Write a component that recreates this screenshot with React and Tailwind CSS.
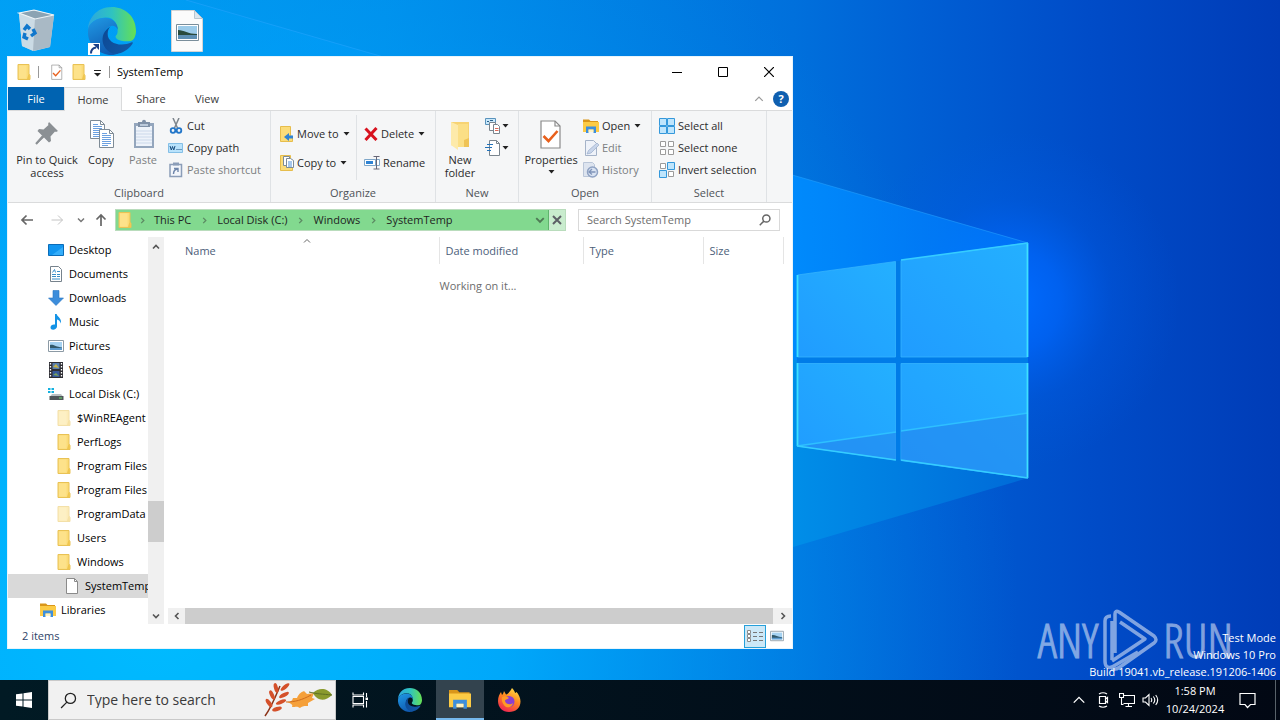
import React from "react";

/* ---------- icons ---------- */

const Svg = ({ w = 16, h = 16, vb, children, className = "" }) => (
  <svg width={w} height={h} viewBox={vb || `0 0 ${w} ${h}`} fill="none" aria-hidden="true" className={`shrink-0 ${className}`}>
    {children}
  </svg>
);

const Folder = ({ w = 16, h = 16, faded = false }) => (
  <Svg w={w} h={h} vb="0 0 16 16">
    <g opacity={faded ? 0.5 : 1}>
      <path d="M2 .5h11v9.500l1 1.500v4H2z" fill="#fbdb78" stroke="#e9c254" strokeWidth="1" />
      <path d="M3 1.500h7.500v13H3z" fill="#fde28a" />
      <path d="M12.500 10l1.200 1.500v3.500h-2.700z" fill="#f0c64e" />
    </g>
  </Svg>
);

const BigFolder = () => (
  <Svg w={32} h={32}>
    <path d="M7 3h18v25H12l-5-2z" fill="#f7d373" />
    <path d="M14 5h10v23H14z" fill="#fbdf86" />
    <path d="M7 3l7 3v25l-7-5z" fill="#fdeaaa" />
    <path d="M20 21l5-2v9h-5z" fill="#efc356" />
  </Svg>
);

const Library = ({ w = 16, h = 16 }) => (
  <Svg w={w} h={h} vb="0 0 16 16">
    <path d="M0 1.500h6l1.500 1.500H15v4H0z" fill="#d9961a" />
    <path d="M0 4h16v10H0z" fill="#fccb45" />
    <path d="M3 15V8.500h10V15h-2.500v-3.500h-5V15z" fill="#3d8fdd" />
    <path d="M5.500 11.500h5V14h-5z" fill="#fff3c4" />
  </Svg>
);

const Caret = () => (
  <Svg w={7} h={4}>
    <path d="M.5 0h6L3.500 3.500z" fill="#222" />
  </Svg>
);

const Chevron = ({ dir = "right", color = "#555", size = 8, sw = 1.500 }) => {
  const d = {
    right: "M2.500 1l3 3-3 3",
    left: "M5.500 1l-3 3 3 3",
    up: "M1 5.500l3-3 3 3",
    down: "M1 2.500l3 3 3-3",
  }[dir];
  return (
    <Svg w={size} h={size} vb="0 0 8 8">
      <path d={d} stroke={color} strokeWidth={sw} />
    </Svg>
  );
};

const Arrow = ({ dir, color }) => {
  const d = { left: "M13 7H2M6.500 2.500L2 7l4.500 4.500", right: "M1.500 7h11M8 2.500L12.500 7 8 11.500", up: "M7 13V2M2.500 6.500L7 2l4.500 4.500" }[dir];
  return (
    <Svg w={14} h={14}>
      <path d={d} stroke={color} strokeWidth={dir === "right" ? 1 : 1.700} />
    </Svg>
  );
};

const Check = ({ w, h }) => (
  <Svg w={w} h={h} vb="0 0 24 32">
    <path d="M2 2h14l5 5v22H2z" fill="#fff" stroke="#8a8a8a" strokeWidth="1.200" />
    <path d="M16 2v5h5" stroke="#8a8a8a" strokeWidth="1.200" />
    <path d="M4.500 17l5 5 9-10" stroke="#e8601c" strokeWidth="2.600" />
  </Svg>
);

const Picture = ({ w = 16, h = 14 }) => (
  <Svg w={w} h={h} vb="0 0 16 14">
    <path d="M.5 1.500h15v11H.5z" fill="#fff" stroke="#8c9aa5" />
    <path d="M2 3h12v8H2z" fill="#a5d2f2" />
    <path d="M2 6c3-1 6 2 12 2.500V10H2z" fill="#31596b" />
    <path d="M2 9h12v2H2z" fill="#5b9bd0" />
  </Svg>
);

const PinIcon = () => (
  <Svg w={32} h={32}>
    <path d="M20 5l7 7-2 1-1-.500-4.500 5 .5 4.500-2 1.500-5-5L7 24l-2 1 1-2 5.500-6-5-5L8 10l4.500.500 5-4.500-.500-1 1-2z" fill="#8b9094" />
    <path d="M12 17l-7 8" stroke="#8b9094" strokeWidth="2" />
  </Svg>
);

const Doc = ({ x, y }) => (
  <g transform={`translate(${x} ${y})`}>
    <path d="M.5.500h10l4 4v14H.5z" fill="#fff" stroke="#7e8b96" />
    <path d="M10.500.500v4h4" stroke="#7e8b96" />
    <path d="M3 6.500h9M3 8.500h9M3 10.500h9M3 12.500h9M3 14.500h9M3 16.500h6M3 4.500h5" stroke="#6ba0e0" />
  </g>
);

const CopyIcon = () => (
  <Svg w={32} h={32}>
    <Doc x={5} y={1} />
    <Doc x={14} y={10} />
  </Svg>
);

const PasteIcon = () => (
  <Svg w={32} h={32}>
    <path d="M7 4h20v25H7z" fill="#94a6bd" />
    <path d="M9 7h16v20H9z" fill="#eef3fa" />
    <path d="M9 12h16M9 15h16M9 18h16M9 21h16M9 24h16" stroke="#cbd8ea" />
    <path d="M11 3h4c0-3 4-3 4 0h4v5H11z" fill="#8091a8" />
    <path d="M13 5h8v2h-8z" fill="#bccadb" />
  </Svg>
);

const CutIcon = () => (
  <Svg>
    <path d="M5 0l4.500 10M11 0L6.500 10" stroke="#7d868d" strokeWidth="1.500" />
    <circle cx="5" cy="12.500" r="2.300" stroke="#2276c9" strokeWidth="1.800" />
    <circle cx="11" cy="12.500" r="2.300" stroke="#2276c9" strokeWidth="1.800" />
  </Svg>
);

const CopyPathIcon = () => (
  <Svg>
    <path d="M.5 3.500h14v9H.5z" fill="#b9e2fb" stroke="#84bfe6" />
    <path d="M2 6l1.300 4L4.500 6.500 5.800 10 7 6M8.500 9.500h1M10.500 9.500h1M12.500 9.500h1" stroke="#1b4f80" />
  </Svg>
);

const PasteShortcutIcon = () => (
  <Svg>
    <path d="M2 2.500h11.500v12H2z" fill="#f3f6fb" stroke="#8b9db8" strokeWidth="1.500" />
    <path d="M5 .5h6v3H5z" fill="#8b9db8" />
    <path d="M5.500 12c0-3 1-4.500 4-5M6 6.500h4V10" stroke="#6f86ab" strokeWidth="1.400" />
  </Svg>
);

const MoveIcon = () => (
  <Svg w={14} h={16}>
    <path d="M.5.500h10v9l2 1.500v4.500H.5z" fill="#fbdc79" stroke="#e6bd4c" />
    <path d="M13 9.500H9V7l-5 4 5 4v-2.500h4z" fill="#2f83d3" />
  </Svg>
);

const CopyToIcon = () => (
  <Svg w={14} h={16}>
    <path d="M.5.500h10v9l2 1.500v4.500H.5z" fill="#fbdc79" stroke="#e6bd4c" />
    <path d="M3.500 1.500h6v9h-6z" fill="#fff" stroke="#7c8b99" />
    <path d="M6.500 3.500h4l3 2v7h-7z" fill="#fff" stroke="#7c8b99" />
    <path d="M8 7h4M8 9h4M8 11h4" stroke="#4a8ddb" />
  </Svg>
);

const DeleteIcon = () => (
  <Svg w={14} h={14}>
    <path d="M1.500 1.500l11 11.500M12.500 1L1.500 13" stroke="#d8121f" strokeWidth="3" />
  </Svg>
);

const RenameIcon = () => (
  <Svg>
    <path d="M.5 4.500h11v6H.5zM11.500 4.500h4v6h-4" fill="#fff" stroke="#7fa7c9" />
    <path d="M2 6h7v3H2z" fill="#2f83d3" />
    <path d="M9.500 1.500h6M12.500 1v13M9.500 14h6" stroke="#667" />
  </Svg>
);

const NewItemIcon = () => (
  <Svg>
    <path d="M.5.500h10v6H.5z" fill="#c9e8fa" stroke="#5a93bd" />
    <path d="M2 3.500h2M5 2.500h3" stroke="#2a618c" />
    <path d="M4.500 4.500h6v8h-6z" fill="#fff" stroke="#7a858e" />
    <path d="M8.500 6.500h4l2 2v7h-6z" fill="#fff" stroke="#7a858e" />
    <path d="M10 10.500h3.500M10 12.500h3.500" stroke="#dd6a5a" />
  </Svg>
);

const EasyAccessIcon = () => (
  <Svg>
    <path d="M4.500.500h7l3 3v12h-10z" fill="#fff" stroke="#7a858e" />
    <path d="M11.500.500v3h3" stroke="#7a858e" />
    <path d="M2 4.500h6M0 7.500h7M2 10.500h4" stroke="#2272b9" strokeWidth="1.200" />
  </Svg>
);

const EditIcon = () => (
  <Svg>
    <path d="M2.500.500h8l3 3v12h-11z" fill="#eef2f9" stroke="#a5b3c8" />
    <path d="M4 14l1.500-3.500L14 3l2 2-8 8z" fill="#c8d5ea" stroke="#9aacca" strokeWidth=".7" />
  </Svg>
);

const HistoryIcon = () => (
  <Svg>
    <path d="M.5.500h9l2 2v12H.5z" fill="#dde4ef" stroke="#bac6d8" />
    <circle cx="9.500" cy="10" r="5" fill="#d9e3f2" stroke="#8fa2c3" strokeWidth="1.500" />
    <path d="M12.500 10H6.500M9 7l-3 3 3 2.500" stroke="#7f94b9" strokeWidth="1.300" />
  </Svg>
);

const SelectAllIcon = () => (
  <Svg>
    <path d="M.5.500h7v7h-7zM8.500.500h7v7h-7zM.5 8.500h7v7h-7zM8.500 8.500h7v7h-7z" fill="#bfe5fc" stroke="#3498db" />
  </Svg>
);
const SelectNoneIcon = () => (
  <Svg>
    <path d="M1.500 1.500h5v5h-5zM9.500 1.500h5v5h-5zM1.500 9.500h5v5h-5zM9.500 9.500h5v5h-5z" fill="#fff" stroke="#9b9b9b" />
  </Svg>
);
const InvertIcon = () => (
  <Svg>
    <path d="M1.500 1.500h5v5h-5zM9.500 9.500h5v5h-5z" fill="#fff" stroke="#9b9b9b" />
    <path d="M8.500.500h7v7h-7zM.5 8.500h7v7h-7z" fill="#bfe5fc" stroke="#3498db" />
  </Svg>
);

const DesktopIcon = () => (
  <Svg>
    <path d="M.5 2.500h15v11H.5z" fill="#1296f0" stroke="#0b6cb8" />
    <path d="M4 13l11-8v8z" fill="#35aefa" />
  </Svg>
);
const DocumentsIcon = () => (
  <Svg>
    <path d="M2.500.500h8l3 3v12h-11z" fill="#fff" stroke="#76828c" />
    <path d="M4.500 6.500l2-3 1 3M9 5.500h3M4 8.500h4M9 8.500h3M4 10.500h4M9 10.500h3M4 13h8" stroke="#3a8fca" />
  </Svg>
);
const DownloadsIcon = () => (
  <Svg>
    <path d="M5 .5h6V8h4.500L8 15.500.5 8H5z" fill="#3c8ddb" stroke="#2a77c2" strokeWidth=".6" />
  </Svg>
);
const MusicIcon = () => (
  <Svg>
    <path d="M7 0h1.700c.5 3 5.500 4 4 9.500-.3-2.500-2-3.500-3.700-4v7c0 3.500-6.500 4.500-6.500 1 0-2.500 2.500-3.500 4.500-3z" fill="#1493e6" />
  </Svg>
);
const VideosIcon = () => (
  <Svg>
    <path d="M1 0h14v16H1z" fill="#2d2d33" />
    <path d="M2.500 1v14M13.500 1v14" stroke="#fff" strokeWidth="1.300" strokeDasharray="1.500 1.500" />
    <path d="M4.500 1h7v6h-7z" fill="#5a7fae" />
    <path d="M4.500 9h7v6h-7z" fill="#36599a" />
    <path d="M5 5l3-3 3 4z" fill="#c9b445" />
    <path d="M5 13l3-2 3 3z" fill="#7aa25a" />
  </Svg>
);
const DriveIcon = () => (
  <Svg>
    <path d="M0 2h2.500v2H0zM3.500 2H6v2H3.500zM0 5h2.500v2H0zM3.500 5H6v2H3.500z" fill="#13b1e0" />
    <path d="M4 8h9l2 2.500H2z" fill="#b9bfc2" />
    <path d="M1.500 10h14v4h-14z" fill="#50565a" />
    <path d="M11 12h3" stroke="#6be06b" />
  </Svg>
);
const PageIcon = () => (
  <Svg>
    <path d="M2.500.500h8l3 3v12h-11z" fill="#fff" stroke="#8a8a8a" />
    <path d="M10.500.500v3h3" stroke="#8a8a8a" />
  </Svg>
);

const EdgeIcon = ({ size, id }) => (
  <Svg w={size} h={size} vb="0 0 256 256">
    <defs>
      <linearGradient id={`${id}a`} x1="0" y1=".3" x2="1" y2=".3">
        <stop offset="0" stopColor="#2ba6e0" />
        <stop offset=".5" stopColor="#2fc3c0" />
        <stop offset="1" stopColor="#66e053" />
      </linearGradient>
      <linearGradient id={`${id}b`} x1=".2" y1="0" x2=".6" y2="1">
        <stop offset="0" stopColor="#1f96e2" />
        <stop offset="1" stopColor="#0f59b0" />
      </linearGradient>
      <linearGradient id={`${id}c`} x1="0" y1=".3" x2="1" y2=".8">
        <stop offset="0" stopColor="#0d4a96" />
        <stop offset="1" stopColor="#1259a8" />
      </linearGradient>
    </defs>
    <path d="M152 149c-2 2-5 6-5 10 0 4 3 8 7 11 22 15 63 13 63 13 37 0 39-48 39-55C256 45 191 0 128 0 38 0 2 70 0 118c10-42 60-62 96-62 50 0 62 44 62 72 0 10-2 16-6 21z" fill={`url(#${id}a)`} />
    <path d="M0 124C4 82 46 58 92 58c40 0 68 28 68 64-18-40-70-20-74 26-4 48 32 92 78 98-14 6-24 10-40 10C58 254-6 200 0 124z" fill={`url(#${id}b)`} />
    <path d="M120 104c-24 10-46 42-42 78 6 44 46 74 84 66 36-8 64-34 76-54 3-5-1-8-5-6-60 28-130 4-128-46 0-16 6-30 15-38z" fill={`url(#${id}c)`} />
  </Svg>
);

const RecycleBin = () => (
  <Svg w={40} h={44}>
    <path d="M2 5l15-3 20 5-4 32-16 4L5 38z" fill="#cfd9e0" />
    <path d="M2 5l16 4-2 34-11-5z" fill="#cbdbe5" />
    <path d="M18 10l19-3-4 32-17 4z" fill="#a9b9c5" />
    <path d="M2 5l15-3 20 5-19 4z" fill="#8ba3b3" stroke="#eef4f7" strokeWidth="1.200" />
    <path d="M7 22l3-4 3 3M16 21l2 4-4 3M11 31l-4-2 1-4" stroke="#1077cc" strokeWidth="3.400" />
  </Svg>
);

const ImageFile = () => (
  <Svg w={34} h={44}>
    <path d="M1.500 1.500h23l8 8v33h-31z" fill="#fbfbfb" stroke="#d4d4d4" />
    <path d="M24.500 1.500v8h8z" fill="#dbe6ee" stroke="#b8c6d0" />
    <path d="M6.500 15.500h22v16h-22z" fill="#fff" stroke="#7a8e9b" />
    <path d="M8 17h19v13H8z" fill="#9ccbe9" />
    <path d="M8 21c6 0 10 4 19 4v2H8z" fill="#294a3c" />
    <path d="M8 26h19v4H8z" fill="#5d8fb3" />
  </Svg>
);

const Leaves = () => (
  <Svg w={72} h={36}>
    <path d="M2 34C8 26 12 16 17 4" stroke="#8b3318" strokeWidth="1.500" />
    <g fill="#d4502a">
      <ellipse cx="13" cy="6" rx="2" ry="5" transform="rotate(-15 13 6)" />
      <ellipse cx="9" cy="13" rx="2" ry="5" transform="rotate(-25 9 13)" />
      <ellipse cx="6" cy="21" rx="2" ry="5" transform="rotate(-35 6 21)" />
      <ellipse cx="22" cy="5" rx="2" ry="5.500" transform="rotate(50 22 5)" />
      <ellipse cx="21" cy="13" rx="2" ry="5.500" transform="rotate(62 21 13)" />
      <ellipse cx="18" cy="20" rx="2" ry="5.500" transform="rotate(68 18 20)" />
      <ellipse cx="14" cy="27" rx="2" ry="5" transform="rotate(72 14 27)" />
    </g>
    <path d="M24 20c4 0 5-1 6-4l4 0c2-5 5-6 7-7l3 3 7-1-2 5 3 1-7 4v3c-4 0-5 0-8 2-3-2-4-1-8-1 1-2 0-3-5-5z" fill="#f5a03a" />
    <path d="M23 20c9 0 16-2 25-7" stroke="#cf6c1d" />
    <path d="M50 11c5-5 14-6 19 2-7 7-15 6-19-2z" fill="#8a9a2c" />
    <path d="M46 10c8 2 13 2 23 3" stroke="#5e6f22" />
  </Svg>
);

const Firefox = () => (
  <Svg w={24} h={26} vb="0 0 24 26">
    <defs>
      <linearGradient id="fx" x1=".8" y1="0" x2=".3" y2="1">
        <stop offset="0" stopColor="#ffe14a" />
        <stop offset=".45" stopColor="#ff8a1f" />
        <stop offset="1" stopColor="#ef2452" />
      </linearGradient>
    </defs>
    <path d="M15 1c2 2 3 4 3 5 1-.5 1.500-1 1.500-1 2 2 4 6 4 9.500C23.500 21 18.500 25 12 25S1 20.500 1 14c0-4 1.500-7 3-9l1 3c1-1 1.500-2 2-4l2 3.500C11 7 13 4.500 15 1z" fill="url(#fx)" />
    <circle cx="12" cy="14.500" r="5.500" fill="#8a3fd1" />
    <path d="M5 10c3-2 6 0 7 1-2 2-4 1-4 3 1 4 6 4 8 2-1 4-4 5-7 4-3-2-5-6-4-10z" fill="#ff9a25" />
  </Svg>
);

const Magnifier = ({ size, color, sw = 1.500 }) => (
  <Svg w={size} h={size} vb="0 0 16 16">
    <circle cx="9.800" cy="6" r="4.800" stroke={color} strokeWidth={sw} />
    <path d="M6.500 9.500L1 15" stroke={color} strokeWidth={sw} />
  </Svg>
);

/* ---------- wallpaper ---------- */

const Wallpaper = () => (
  <svg className="absolute inset-0 h-full w-full" viewBox="0 0 1280 720" preserveAspectRatio="xMidYMid slice" aria-hidden="true">
    <defs>
      <linearGradient id="base" x1="0" y1="0" x2="1" y2="0">
        <stop offset="0" stopColor="#00a0f2" />
        <stop offset=".3" stopColor="#0090ec" />
        <stop offset=".5" stopColor="#007de2" />
        <stop offset=".62" stopColor="#0070dc" />
        <stop offset=".72" stopColor="#005fd4" />
        <stop offset=".85" stopColor="#004cc8" />
        <stop offset="1" stopColor="#003cb7" />
      </linearGradient>
      <radialGradient id="low" gradientUnits="userSpaceOnUse" cx="160" cy="620" r="860">
        <stop offset="0" stopColor="#00bbff" />
        <stop offset=".4" stopColor="#00b0ff" stopOpacity=".8" />
        <stop offset="1" stopColor="#0088e8" stopOpacity="0" />
      </radialGradient>
      <radialGradient id="glow" gradientUnits="userSpaceOnUse" cx="1010" cy="300" r="170">
        <stop offset="0" stopColor="#006cff" />
        <stop offset=".3" stopColor="#0068ff" stopOpacity=".7" />
        <stop offset=".6" stopColor="#0060f0" stopOpacity=".25" />
        <stop offset="1" stopColor="#005ce4" stopOpacity="0" />
      </radialGradient>
      <linearGradient id="beam" gradientUnits="userSpaceOnUse" x1="200" y1="0" x2="1028" y2="0">
        <stop offset="0" stopColor="#00a4fa" stopOpacity=".3" />
        <stop offset=".72" stopColor="#008cff" stopOpacity=".9" />
        <stop offset="1" stopColor="#007cff" stopOpacity=".6" />
      </linearGradient>
      <linearGradient id="beamLow" gradientUnits="userSpaceOnUse" x1="793" y1="0" x2="1028" y2="0">
        <stop offset="0" stopColor="#008ee8" />
        <stop offset="1" stopColor="#006ad8" />
      </linearGradient>
      <linearGradient id="pane" x1="0" y1="1" x2="1" y2="0">
        <stop offset="0" stopColor="#209cff" />
        <stop offset="1" stopColor="#24b0ff" />
      </linearGradient>
    </defs>
    <path d="M0 0h1280v720H0z" fill="url(#base)" />
    <path d="M0 0h1280v720H0z" fill="url(#low)" />
    <path d="M0 0h1280v720H0z" fill="url(#glow)" />
    <path d="M186 0L1028 243V360H0V0z" fill="url(#beam)" />
    <path d="M186 0L1028 243" stroke="#29a6ff" strokeOpacity=".5" />
    <path d="M700 360h328v118L793 547l-93 27z" fill="url(#beamLow)" />
    <path d="M797 275l231-32v235l-231-32z" fill="#007ce8" />
    <g fill="url(#pane)" stroke="#35b4ff" strokeOpacity=".8">
      <path d="M797.500 275l98-13.500V357h-98z" />
      <path d="M901 260.500L1027.500 243v114H901z" />
      <path d="M797.500 363.500h98V460l-98-14z" />
      <path d="M901 363.500h126.500V478L901 460.500z" />
    </g>
    <path d="M797 446l99-14v28zM901 431l127-18v65l-127-18z" fill="#2488ee" fillOpacity=".6" />
    <path d="M797 446l99-14M901 431l127-18" stroke="#2ec0ff" strokeWidth="1.500" />
    <path d="M797.500 275v82M797.500 363v83M1027.500 243v114M1027.500 363v115" stroke="#3fe0ff" strokeWidth="1.800" />
    <path d="M797 446l99 14M901 460l127 18M901 260l127-17" stroke="#35cdff" strokeWidth="1.500" />
  </svg>
);

/* ---------- ribbon pieces ---------- */

const Group = ({ label, width, children }) => (
  <section className={`flex shrink-0 flex-col border-r border-[#dfe2e5] ${width}`}>
    <div className="flex flex-1 pt-1">{children}</div>
    <h2 className="h-[18px] text-center leading-[18px] text-[#4f5357]">{label}</h2>
  </section>
);

const Big = ({ icon, lines, width, muted = false, caret = false }) => (
  <button type="button" className={`flex shrink-0 flex-col items-center pt-1 leading-[13px] ${width} ${muted ? "text-[#7b7e81]" : ""}`}>
    {icon}
    <span className="mt-[2px] whitespace-pre">{lines}</span>
    {caret && <span className="mt-1"><Caret /></span>}
  </button>
);

const Small = ({ icon, text, muted = false, caret = false, tall = false }) => (
  <button type="button" className={`flex items-center gap-[3px] whitespace-nowrap text-left ${tall ? "h-[29px]" : "h-[22px]"} ${muted ? "text-[#7b7e81]" : ""}`}>
    {icon}
    <span>{text}</span>
    {caret && <span className="ml-px"><Caret /></span>}
  </button>
);

const tree = [
  ["Desktop", <DesktopIcon />, 1],
  ["Documents", <DocumentsIcon />, 1],
  ["Downloads", <DownloadsIcon />, 1],
  ["Music", <MusicIcon />, 1],
  ["Pictures", <Picture />, 1],
  ["Videos", <VideosIcon />, 1],
  ["Local Disk (C:)", <DriveIcon />, 1],
  ["$WinREAgent", <Folder faded />, 2],
  ["PerfLogs", <Folder />, 2],
  ["Program Files", <Folder />, 2],
  ["Program Files (x86)", <Folder />, 2],
  ["ProgramData", <Folder faded />, 2],
  ["Users", <Folder />, 2],
  ["Windows", <Folder />, 2],
  ["SystemTemp", <PageIcon />, 3],
  ["Libraries", <Library />, 0],
];
const indent = ["pl-8", "pl-10", "pl-12", "pl-14"];

const TitleBar = () => (
  <header className="flex h-[30px] shrink-0 items-center">
    <div className="flex flex-1 items-center pl-2">
      <Folder />
      <span className="mx-[6px] h-3 w-px bg-[#999]" />
      <button type="button" aria-label="Properties" className="ml-1"><Check w={16} h={17} /></button>
      <button type="button" aria-label="New folder" className="ml-[6px]"><Folder /></button>
      <button type="button" aria-label="Customize Quick Access Toolbar" className="ml-[6px]">
        <Svg w={9} h={9}><path d="M1 2.500h7" stroke="#222" /><path d="M1 5h7L4.500 8.500z" fill="#222" /></Svg>
      </button>
      <span className="mx-[7px] h-3 w-px bg-[#999]" />
      <h1 className="text-black">SystemTemp</h1>
    </div>
    <button type="button" aria-label="Minimize" className="flex h-full w-[46px] items-center justify-center">
      <Svg w={10} h={10}><path d="M0 5.500h10" stroke="#000" /></Svg>
    </button>
    <button type="button" aria-label="Maximize" className="flex h-full w-[46px] items-center justify-center">
      <Svg w={10} h={10}><path d="M.5.500h9v9h-9z" stroke="#000" /></Svg>
    </button>
    <button type="button" aria-label="Close" className="flex h-full w-[46px] items-center justify-center">
      <Svg w={10} h={10}><path d="M0 0l10 10M10 0L0 10" stroke="#000" strokeWidth="1.200" /></Svg>
    </button>
  </header>
);

const Tabs = () => (
  <div className="flex h-6 shrink-0 items-stretch border-b border-[#dadbdc] text-[#3b3b3b]">
    <button type="button" className="w-14 bg-[#0063b1] text-white">File</button>
    <button type="button" className="-mb-px w-[58px] border-x border-t border-[#dadbdc] bg-[#f5f6f7]">Home</button>
    <button type="button" className="w-[58px]">Share</button>
    <button type="button" className="w-[54px]">View</button>
    <div className="flex flex-1 items-center justify-end gap-[9px] pr-[3px]">
      <button type="button" aria-label="Minimize the Ribbon"><Chevron dir="up" size={10} color="#999" sw={1} /></button>
      <button type="button" aria-label="Help" className="flex h-4 w-4 items-center justify-center rounded-full bg-[#0f5fb0] text-[11px] leading-4 font-bold text-white">?</button>
    </div>
  </div>
);

const Ribbon = () => (
  <div className="flex h-[92px] shrink-0 overflow-hidden border-b border-[#dadbdc] bg-[#f5f6f7] text-[#2b2b2b]">
    <Group label="Clipboard" width="w-[263px]">
      <div className="flex pl-[6px]">
        <Big icon={<PinIcon />} lines={"Pin to Quick\naccess"} width="w-[66px]" />
        <Big icon={<CopyIcon />} lines="Copy" width="w-[42px]" />
        <Big icon={<PasteIcon />} lines="Paste" width="w-[42px]" muted />
      </div>
      <div className="ml-1 flex flex-col">
        <Small icon={<CutIcon />} text="Cut" />
        <Small icon={<CopyPathIcon />} text="Copy path" />
        <Small icon={<PasteShortcutIcon />} text="Paste shortcut" muted />
      </div>
    </Group>
    <Group label="Organize" width="w-[165px]">
      <div className="mb-1 flex w-[86px] flex-col border-r border-[#dfe2e5] pt-1 pl-[9px]">
        <Small icon={<MoveIcon />} text="Move to" caret tall />
        <Small icon={<CopyToIcon />} text="Copy to" caret tall />
      </div>
      <div className="flex flex-col pt-1 pl-[7px]">
        <Small icon={<DeleteIcon />} text="Delete" caret tall />
        <Small icon={<RenameIcon />} text="Rename" tall />
      </div>
    </Group>
    <Group label="New" width="w-[83px]">
      <Big icon={<BigFolder />} lines={"New\nfolder"} width="w-12" />
      <div className="flex flex-col pl-px">
        <button type="button" aria-label="New item" className="flex h-[22px] items-center gap-px"><NewItemIcon /><Caret /></button>
        <button type="button" aria-label="Easy access" className="flex h-[22px] items-center gap-px"><EasyAccessIcon /><Caret /></button>
      </div>
    </Group>
    <Group label="Open" width="w-[133px]">
      <Big icon={<Check w={24} h={32} />} lines="Properties" width="w-16" caret />
      <div className="flex flex-col">
        <Small icon={<Library />} text="Open" caret />
        <Small icon={<EditIcon />} text="Edit" muted />
        <Small icon={<HistoryIcon />} text="History" muted />
      </div>
    </Group>
    <Group label="Select" width="w-[115px]">
      <div className="flex flex-col pl-[7px]">
        <Small icon={<SelectAllIcon />} text="Select all" />
        <Small icon={<SelectNoneIcon />} text="Select none" />
        <Small icon={<InvertIcon />} text="Invert selection" />
      </div>
    </Group>
  </div>
);

const AddressRow = () => (
  <div className="flex h-[34px] shrink-0 items-center pr-3 text-[#1f1f1f]">
    <div className="flex w-[107px] items-center pl-3">
      <button type="button" aria-label="Back"><Arrow dir="left" color="#666" /></button>
      <button type="button" aria-label="Forward" className="ml-4"><Arrow dir="right" color="#c4c4c4" /></button>
      <button type="button" aria-label="Recent locations" className="ml-[13px]"><Chevron dir="down" color="#777" /></button>
      <button type="button" aria-label="Up" className="ml-[9px]"><Arrow dir="up" color="#666" /></button>
    </div>
    <nav aria-label="Address" className="flex h-[22px] flex-1 items-center border border-[#b9dcbc] bg-[#82d98f] pl-px">
      <Folder />
      <span className="ml-px flex w-[17px] justify-center"><Chevron color="#5c8a63" size={7} /></span>
      {["This PC", "Local Disk (C:)", "Windows"].map((t) => (
        <React.Fragment key={t}>
          <a href="#" className="px-[3px] whitespace-nowrap">{t}</a>
          <span className="flex w-5 justify-center"><Chevron color="#5c8a63" size={7} /></span>
        </React.Fragment>
      ))}
      <a href="#" className="px-[3px]">SystemTemp</a>
      <button type="button" aria-label="Previous locations" className="mr-[3px] ml-auto"><Chevron dir="down" size={10} color="#4f7a55" /></button>
      <button type="button" aria-label="Stop loading" className="flex h-full w-[17px] items-center justify-center border-l border-[#5fb56d] bg-[#c9ecce]">
        <Svg w={10} h={10}><path d="M1 1l8 8M9 1L1 9" stroke="#5c5f66" strokeWidth="2" /></Svg>
      </button>
    </nav>
    <label className="ml-3 flex h-[22px] w-[202px] items-center border border-[#d9d9d9] pr-2 pl-2">
      <input type="text" aria-label="Search SystemTemp" placeholder="Search SystemTemp" className="min-w-0 flex-1 outline-none placeholder:text-[#6d6d6d]" />
      <Magnifier size={12} color="#666" sw={2} />
    </label>
  </div>
);

const NavPane = () => (
  <div className="flex w-[156px] shrink-0 text-black">
    <ul className="min-w-0 flex-1 overflow-hidden pt-px">
      {tree.map(([name, icon, level]) => (
        <li key={name} className={name === "SystemTemp" ? "bg-[#d9d9d9]" : ""}>
          <button type="button" className={`flex h-6 w-full items-center gap-[5px] whitespace-nowrap ${indent[level]}`}>
            {icon}
            <span>{name}</span>
          </button>
        </li>
      ))}
    </ul>
    <div className="flex w-4 flex-col items-center bg-[#f0f0f0]">
      <button type="button" aria-label="Scroll up" className="flex h-5 items-center"><Chevron dir="up" sw={1.600} /></button>
      <span className="flex-[244]" />
      <span className="h-[41px] w-4 bg-[#cdcdcd]" />
      <span className="flex-[66]" />
      <button type="button" aria-label="Scroll down" className="flex h-4 items-center"><Chevron dir="down" sw={1.600} /></button>
    </div>
  </div>
);

const FileList = () => (
  <div className="flex min-w-0 flex-1 flex-col pl-1">
    <div className="flex-1">
      <table className="w-full table-fixed border-collapse text-[#4c607a]">
        <colgroup>
          <col />
          <col className="w-36" />
          <col className="w-[120px]" />
          <col className="w-20" />
          <col className="w-[9px]" />
        </colgroup>
        <thead>
          <tr className="h-[27px] text-left">
            <th scope="col" aria-sort="ascending" className="relative border-r border-[#e5e5e5] pl-[17px] font-normal">
              Name
              <span className="absolute top-0 left-1/2"><Chevron dir="up" color="#666" sw={1} /></span>
            </th>
            <th scope="col" className="border-r border-[#e5e5e5] pl-[6px] font-normal">Date modified</th>
            <th scope="col" className="border-r border-[#e5e5e5] pl-[6px] font-normal">Type</th>
            <th scope="col" className="border-r border-[#e5e5e5] pl-[6px] font-normal">Size</th>
            <td />
          </tr>
        </thead>
        <tbody>
          <tr className="h-11">
            <td colSpan={5} className="pr-1 text-center text-[#6d6d6d]">Working on it...</td>
          </tr>
        </tbody>
      </table>
    </div>
    <div className="flex h-4 items-stretch bg-[#f0f0f0]">
      <button type="button" aria-label="Scroll left" className="flex w-[17px] items-center justify-center"><Chevron dir="left" sw={1.600} /></button>
      <span className="flex-1 bg-[#cdcdcd]" />
      <button type="button" aria-label="Scroll right" className="flex w-[19px] items-center justify-center"><Chevron dir="right" sw={1.600} /></button>
    </div>
  </div>
);

const StatusBar = () => (
  <footer className="flex h-6 shrink-0 items-center pr-2 pl-[14px] text-[#2f4368]">
    <span className="flex-1">2 items</span>
    <button type="button" aria-label="Details view" className="flex h-[23px] w-[22px] items-center justify-center border border-[#26a0da] bg-[#cce8f7]">
      <Svg w={16} h={14}>
        <path d="M.5 1.500h3v3h-3zM.5 5.500h3v3h-3zM.5 9.500h3v3h-3z" fill="#fff" stroke="#8a8a8a" />
        <path d="M6 3.500h4M12 3.500h4M6 7.500h4M12 7.500h4M6 11.500h4M12 11.500h4" stroke="#777" />
      </Svg>
    </button>
    <button type="button" aria-label="Large icons view" className="ml-1"><Picture w={14} h={12} /></button>
  </footer>
);

const Watermark = () => (
  <div className="absolute right-[47px] bottom-2 flex h-16 items-center text-[48px] leading-none font-light text-white opacity-50 [-webkit-text-stroke:1px_white] [font-family:'Open_Sans_Condensed_Light','Roboto_Condensed_Light','Roboto_Condensed','Liberation_Sans_Narrow',sans-serif]">
    <span>ANY</span>
    <Svg w={58} h={64} className="mr-1 ml-[3px]">
      <path d="M10 8Q4 8 4 13V53Q4 61 11 59L37 44" stroke="#fff" strokeWidth="3.500" strokeLinejoin="round" />
      <path d="M11 52V13M14 45V6Q14 2 18 4L53 28Q57 32 53 35L19 59Q15 62 10 61" stroke="#fff" strokeWidth="3.500" strokeLinejoin="round" />
      <path d="M19 14L44 31 11 53" stroke="#fff" strokeWidth="3.500" strokeLinejoin="round" />
    </Svg>
    <span>RUN</span>
  </div>
);

const Taskbar = () => (
  <footer className="relative flex h-10 shrink-0 items-stretch bg-linear-to-r from-[#011a24] to-[#020814] text-white">
    <button type="button" aria-label="Start" className="flex w-12 items-center justify-center">
      <Svg><path d="M0 2.300L6.500 1.400v6.100H0zM7.500 1.200L16 0v7.500H7.500zM0 8.500h6.500v6.100L0 13.700zM7.500 8.500H16V16l-8.500-1.200z" fill="#fff" /></Svg>
    </button>
    <label className="flex w-72 items-center border border-[#c9c9c9] bg-[#f1f1f1] pl-[11px] text-[14px]">
      <Magnifier size={17} color="#222" sw={1.200} />
      <input type="text" aria-label="Type here to search" placeholder="Type here to search" className="ml-[10px] min-w-0 flex-1 outline-none placeholder:text-[#3a3a3a]" />
      <Leaves />
    </label>
    <button type="button" aria-label="Task View" className="flex w-12 items-center justify-center">
      <Svg w={17} h={16}>
        <path d="M1 .500v2.500h10.500V.500M1 15.500V13h10.500v2.500M1 4.500h10.500v7H1zM14.500 1v4M14.500 9v6.500" stroke="#fff" strokeWidth="1.100" />
        <path d="M13.500 5.500h2.500V8h-2.500z" fill="#fff" />
      </Svg>
    </button>
    <button type="button" aria-label="Microsoft Edge" className="flex w-[52px] items-center justify-center"><EdgeIcon size={24} id="t" /></button>
    <button type="button" aria-label="File Explorer" className="flex w-12 items-center justify-center border-b-2 border-[#76b9ed] bg-[#33434e]"><Library w={22} h={22} /></button>
    <button type="button" aria-label="Firefox" className="flex w-[50px] items-center justify-center"><Firefox /></button>
    <div className="ml-auto flex items-center">
      <button type="button" aria-label="Show hidden icons" className="flex w-6 justify-center"><Chevron dir="up" size={14} color="#fff" sw={0.800} /></button>
      <button type="button" aria-label="Meet Now" className="flex w-6 justify-center">
        <Svg><path d="M4.500 4.500h6v7h-6zM10.500 7l2-1.500v5l-2-1.500M4 2q4-2.500 8 0M4 14q4 2.500 8 0" stroke="#fff" strokeWidth="1.200" /></Svg>
      </button>
      <button type="button" aria-label="Network" className="flex w-6 justify-center">
        <Svg><path d="M4.500 3.500h11v8h-11M9.500 11.500v3M6.500 14.500h6.500M.5 1.500h4v4h-4zM2.500 5.500v7h2" stroke="#fff" strokeWidth="1.100" /></Svg>
      </button>
      <button type="button" aria-label="Volume" className="flex w-6 justify-center">
        <Svg w={18}><path d="M1 6h2.500L7 2.500v11L3.500 10H1zM9 6q1.500 2 0 4M11.300 4.500q3 3.500 0 7M13.700 3q4 5 0 10" stroke="#fff" strokeWidth="1.100" /></Svg>
      </button>
      <time className="w-16 text-center leading-[18px]">1:58 PM<br />10/24/2024</time>
      <button type="button" aria-label="Notifications" className="flex w-10 justify-center">
        <Svg w={17} h={17}><path d="M1 1.500h15v11h-4.500L8.500 15.500l-2.500-3H1z" stroke="#fff" strokeWidth="1.200" /></Svg>
      </button>
      <button type="button" aria-label="Show desktop" className="ml-2 h-10 w-[5px] border-l border-[#59626a]" />
    </div>
  </footer>
);

export default function App() {
  return (
    <div className="relative flex h-screen flex-col overflow-hidden text-[11px] leading-4 [font-family:'Open_Sans','Noto_Sans',sans-serif]">
      <Wallpaper />
      <main className="relative min-h-0 flex-1">
        <div className="flex items-start pt-2 pl-[17px]">
          <button type="button" aria-label="Recycle Bin" className="w-10"><RecycleBin /></button>
          <button type="button" aria-label="Microsoft Edge" className="relative ml-[31px] -mt-px">
            <EdgeIcon size={48} id="d" />
            <span className="absolute bottom-0 left-0 flex h-3 w-3 items-center justify-center bg-white">
              <Svg w={10} h={10}><path d="M2 9.500C2 6 3.500 4 7 3.500" stroke="#1b3f86" strokeWidth="2" /><path d="M4 0h6v6z" fill="#1b3f86" /></Svg>
            </span>
          </button>
          <button type="button" aria-label="Image file" className="ml-[34px] pt-px"><ImageFile /></button>
        </div>
        <Watermark />
        <div className="absolute right-1 bottom-0 text-right leading-[17px] text-white">
          <p>Test Mode</p>
          <p>Windows 10 Pro</p>
          <p>Build 19041.vb_release.191206-1406</p>
        </div>
        <div className="absolute top-14 bottom-[31px] left-[7px] flex w-[786px] max-w-full flex-col overflow-hidden border border-[#e8f4fb] bg-white">
          <TitleBar />
          <Tabs />
          <Ribbon />
          <AddressRow />
          <div className="flex min-h-0 flex-1">
            <NavPane />
            <FileList />
          </div>
          <StatusBar />
        </div>
      </main>
      <Taskbar />
    </div>
  );
}
